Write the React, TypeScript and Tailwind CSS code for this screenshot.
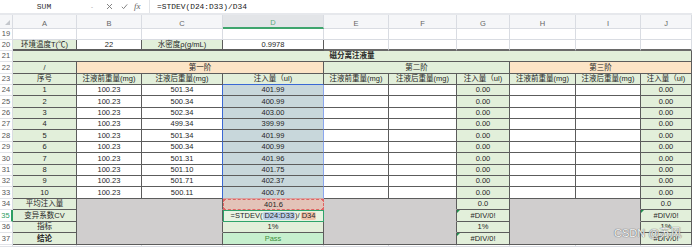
import React from "react";

const FONT = "font-['Liberation_Sans','Noto_Sans_CJK_SC',sans-serif]";
const DK = "border-[#5c5c5c]";
const LT = "border-[#d9dce2]";
const GREEN = "bg-[#e2efda]";
const ORANGE = "bg-[#fce4c6]";
const SEL = "bg-[#c8d7db]";
const GREY = "bg-[#d0cece]";

const WA = "w-[64px]";
const WB = "w-[65px]";
const WC = "w-[81px]";
const WD = "w-[101px]";
const WE = "w-[65px]";
const WF = "w-[68px]";
const WG = "w-[53px]";
const WH = "w-[66px]";
const WI = "w-[65px]";
const WJ = "w-[51px]";
const COLS = [WA, WB, WC, WD, WE, WF, WG, WH, WI, WJ];

type CellProps = {
  w: string;
  bg?: string;
  b?: string;
  cls?: string;
  children?: React.ReactNode;
};

function Cell({ w, bg = "bg-white", b = DK, cls = "", children }: CellProps) {
  return (
    <div
      className={`${w} shrink-0 h-full relative flex items-center justify-center border-r border-b ${b} ${bg} ${cls}`}
    >
      {children}
    </div>
  );
}

function Row({
  n,
  h,
  active,
  children,
}: {
  n: string;
  h: string;
  active?: boolean;
  children?: React.ReactNode;
}) {
  return (
    <div className={`flex ${h}`}>
      <div
        className={`w-[13px] shrink-0 h-full flex items-center justify-center border-b border-[#e1e3e8] bg-white ${
          active
            ? "text-[#2e9e62] border-r-2 border-r-[#2e9e62]"
            : "text-[#555] border-r border-r-[#d9dce2]"
        }`}
      >
        {n}
      </div>
      {children}
    </div>
  );
}

function Tri() {
  return (
    <div className="absolute top-0 left-0 w-0 h-0 border-t-[3px] border-r-[3px] border-t-[#1f8f4e] border-r-transparent" />
  );
}

const C_VALS = ["501.34", "500.34", "502.34", "499.34", "501.34", "500.34", "501.31", "501.10", "501.71", "500.11"];
const D_VALS = ["401.99", "400.99", "403.00", "399.99", "401.99", "400.99", "401.96", "401.75", "402.37", "400.76"];
const DATA_H = ["h-[11px]", "h-[12px]", "h-[11px]", "h-[11px]", "h-[12px]", "h-[11px]", "h-[12px]", "h-[11px]", "h-[11px]", "h-[12px]"];

export default function App() {
  return (
    <div className={`w-[692px] h-[247px] overflow-hidden bg-white relative text-[7.5px] leading-none text-[#262626] ${FONT}`}>
      {/* formula bar */}
      <div className="h-[13px] flex items-center bg-white">
        <div className="w-[88px] h-full flex items-center justify-center font-['Liberation_Mono',monospace] text-[8px] text-[#333]">
          SUM
        </div>
        <div className="w-[8px] h-full flex items-center justify-center text-[#888] text-[6px]">-</div>
        <svg className="ml-[10px]" width="7" height="7" viewBox="0 0 7 7">
          <path d="M1 1L6 6M6 1L1 6" stroke="#777" strokeWidth="0.9" fill="none" />
        </svg>
        <svg className="ml-[8px]" width="7" height="7" viewBox="0 0 7 7">
          <path d="M0.8 3.8L2.6 5.6L6.2 1.4" stroke="#777" strokeWidth="0.9" fill="none" />
        </svg>
        <span className="ml-[6px] w-[11px] font-['Liberation_Serif',serif] italic text-[9px] text-[#666]">fx</span>
        <div className="ml-[4px] w-px h-full bg-[#e2e4e8]" />
        <span className="ml-[7px] font-['Liberation_Mono',monospace] text-[7.9px] text-[#222]">=STDEV(D24:D33)/D34</span>
      </div>

      {/* column header */}
      <div className="h-[16px] flex bg-[#f5f6f8] border-t-2 border-[#e6e8ec] text-[#666]">
        <div className="w-[13px] shrink-0 h-full relative border-r border-b border-[#d9dce2]">
          <div className="absolute right-[2px] bottom-[3px] w-0 h-0 border-b-[5px] border-l-[5px] border-b-[#c4c7cc] border-l-transparent" />
        </div>
        {["A", "B", "C", "D", "E", "F", "G", "H", "I", "J"].map((l, i) => (
          <div
            key={l}
            className={`${COLS[i]} shrink-0 h-full flex items-center justify-center pt-[4px] border-r ${
              l === "D"
                ? "bg-[#e3e5e8] border-b-2 border-b-[#3fa56d] border-r-[#d9dce2] text-[#5aaa7d]"
                : "border-b border-[#d9dce2]"
            }`}
          >
            {l}
          </div>
        ))}
      </div>

      {/* row 19 */}
      <Row n="19" h="h-[11px]">
        {COLS.map((w, i) => (
          <Cell key={i} w={w} b={LT} />
        ))}
      </Row>

      {/* row 20 */}
      <Row n="20" h="h-[11px]">
        <Cell w={WA} bg={GREEN} cls="border-b-2">环境温度T(℃)</Cell>
        <Cell w={WB} cls="border-b-2">22</Cell>
        <Cell w={WC} bg={GREEN} cls="border-b-2">水密度ρ(g/mL)</Cell>
        <Cell w={WD} cls="border-b-2">0.9978</Cell>
        {[WE, WF, WG, WH, WI, WJ].map((w, i) => (
          <Cell key={i} w={w} b="border-r-[#d9dce2] border-b-2 border-b-[#6a6a6a]" />
        ))}
      </Row>

      {/* row 21 */}
      <Row n="21" h="h-[11px]">
        <Cell w="w-[679px]" bg={GREEN} cls="font-bold">磁分离注液量</Cell>
      </Row>

      {/* row 22 */}
      <Row n="22" h="h-[12px]">
        <Cell w={WA} bg={GREEN}>/</Cell>
        <Cell w="w-[247px]" bg={ORANGE}>第一阶</Cell>
        <Cell w="w-[186px]" bg={GREEN}>第二阶</Cell>
        <Cell w="w-[182px]" bg={ORANGE}>第三阶</Cell>
      </Row>

      {/* row 23 */}
      <Row n="23" h="h-[11px]">
        <Cell w={WA} bg={GREEN}>序号</Cell>
        <Cell w={WB} bg={GREEN}>注液前重量(mg)</Cell>
        <Cell w={WC} bg={GREEN}>注液后重量(mg)</Cell>
        <Cell w={WD} bg={GREEN} b="border-r-[#5c5c5c] border-b-[#3a68d4]">注入量（ul)</Cell>
        <Cell w={WE} bg={GREEN}>注液前重量(mg)</Cell>
        <Cell w={WF} bg={GREEN}>注液后重量(mg)</Cell>
        <Cell w={WG} bg={GREEN}>注入量（ul)</Cell>
        <Cell w={WH} bg={GREEN}>注液前重量(mg)</Cell>
        <Cell w={WI} bg={GREEN}>注液后重量(mg)</Cell>
        <Cell w={WJ} bg={GREEN}>注入量（ul)</Cell>
      </Row>

      {/* rows 24-33 */}
      {D_VALS.map((d, i) => (
        <Row key={i} n={String(24 + i)} h={DATA_H[i]}>
          <Cell w={WA} bg={GREEN}>{i + 1}</Cell>
          <Cell w={WB}>100.23</Cell>
          <Cell w={WC} b="border-b-[#5c5c5c] border-r-[#3a68d4]">{C_VALS[i]}</Cell>
          <Cell
            w={WD}
            bg={SEL}
            b={`border-r-[#8ba6ef] ${i === 9 ? "border-b-[#d9a0a0]" : "border-b-[#5c5c5c]"}`}
          >
            {d}
          </Cell>
          <Cell w={WE} />
          <Cell w={WF} />
          <Cell w={WG} bg={GREEN}>0.00</Cell>
          <Cell w={WH} />
          <Cell w={WI} />
          <Cell w={WJ} bg={GREEN}>0.00</Cell>
        </Row>
      ))}

      {/* row 34 */}
      <Row n="34" h="h-[11px]">
        <Cell w={WA} bg={GREEN}>平均注入量</Cell>
        <Cell w="w-[146px]" bg={GREY} b="border-r-[#5c5c5c] border-b-[#d0cece]" />
        <div className="w-[101px] shrink-0 h-full relative flex items-center justify-center bg-[#e3c3b8] border border-dashed border-[#e06464]">
          401.6
          <div className="absolute -left-[1px] -top-[1px] w-[2px] h-[2px] bg-[#e06464]" />
          <div className="absolute -right-[1px] -top-[1px] w-[2px] h-[2px] bg-[#e06464]" />
          <div className="absolute -left-[1px] -bottom-[1px] w-[2px] h-[2px] bg-[#e06464]" />
          <div className="absolute -right-[1px] -bottom-[1px] w-[2px] h-[2px] bg-[#e06464]" />
        </div>
        <Cell w="w-[133px]" bg={GREY} b="border-r-[#5c5c5c] border-b-[#d0cece]" />
        <Cell w={WG} bg={GREEN}>0.0</Cell>
        <Cell w="w-[131px]" bg={GREY} b="border-r-[#5c5c5c] border-b-[#d0cece]" />
        <Cell w={WJ} bg={GREEN}>0.0</Cell>
      </Row>

      {/* row 35 */}
      <Row n="35" h="h-[12px]" active>
        <Cell w={WA} bg={GREEN}>变异系数CV</Cell>
        <Cell w="w-[146px]" bg={GREY} b="border-r-[#5c5c5c] border-b-[#d0cece]" />
        <div className="w-[101px] shrink-0 h-full flex items-center justify-center bg-[#e8f3e2] border border-[#2fa36b]">
          <span>=STDEV(</span>
          <span className="ml-[1px] px-[1px] rounded-[2px] bg-[#b8cde6]">D24:D33</span>
          <span>)/</span>
          <span className="ml-[1px] px-[1px] rounded-[2px] bg-[#f0c3ab]">D34</span>
        </div>
        <Cell w="w-[133px]" bg={GREY} b="border-r-[#5c5c5c] border-b-[#d0cece]" />
        <Cell w={WG} bg={GREEN}>
          <Tri />
          #DIV/0!
        </Cell>
        <Cell w="w-[131px]" bg={GREY} b="border-r-[#5c5c5c] border-b-[#d0cece]" />
        <Cell w={WJ} bg={GREEN}>
          <Tri />
          #DIV/0!
        </Cell>
      </Row>

      {/* row 36 */}
      <Row n="36" h="h-[11px]">
        <Cell w={WA} bg={GREEN}>指标</Cell>
        <Cell w="w-[146px]" bg={GREY} b="border-r-[#5c5c5c] border-b-[#d0cece]" />
        <Cell w={WD} bg={GREEN}>1%</Cell>
        <Cell w="w-[133px]" bg={GREY} b="border-r-[#5c5c5c] border-b-[#d0cece]" />
        <Cell w={WG} bg={GREEN}>1%</Cell>
        <Cell w="w-[131px]" bg={GREY} b="border-r-[#5c5c5c] border-b-[#d0cece]" />
        <Cell w={WJ} bg={GREEN}>1%</Cell>
      </Row>

      {/* row 37 */}
      <Row n="37" h="h-[12px]">
        <Cell w={WA} bg={GREEN} cls="font-bold">结论</Cell>
        <Cell w="w-[146px]" bg={GREY} />
        <Cell w={WD} bg="bg-[#c6efce]" cls="text-[#3f8f3f]">Pass</Cell>
        <Cell w="w-[133px]" bg={GREY} />
        <Cell w={WG} bg={GREEN}>
          <Tri />
          #DIV/0!
        </Cell>
        <Cell w="w-[131px]" bg={GREY} />
        <Cell w={WJ} bg={GREEN}>
          #DIV/0!
        </Cell>
      </Row>

      {/* row 38 (partial) */}
      <Row n="" h="h-[2px]">
        {COLS.map((w, i) => (
          <Cell key={i} w={w} b={LT} />
        ))}
      </Row>

      {/* watermark */}
      <div className="absolute left-[614px] top-[228px] text-[11px] leading-none text-[#f4f4f4] [text-shadow:0_0_1px_#666,0_0_1px_#666]">
        CSDN @苏风
      </div>
    </div>
  );
}
